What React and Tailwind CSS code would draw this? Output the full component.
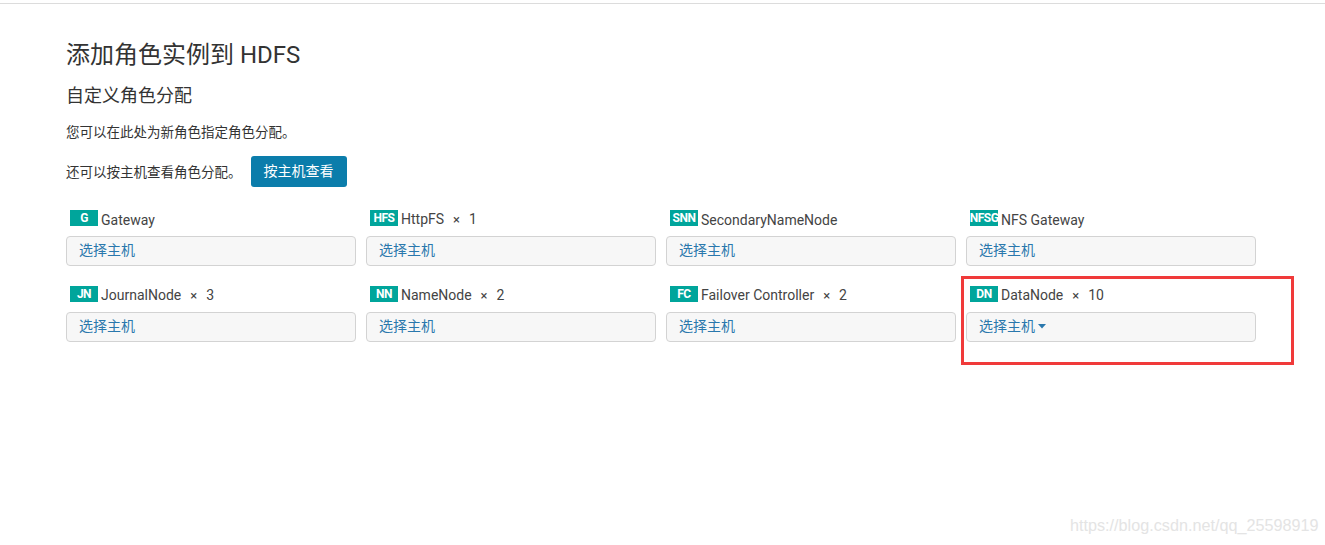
import React from "react";

const roles = [
  { badge: "G", name: "Gateway", count: null },
  { badge: "HFS", name: "HttpFS", count: "1" },
  { badge: "SNN", name: "SecondaryNameNode", count: null },
  { badge: "NFSG", name: "NFS Gateway", count: null },
  { badge: "JN", name: "JournalNode", count: "3" },
  { badge: "NN", name: "NameNode", count: "2" },
  { badge: "FC", name: "Failover Controller", count: "2" },
  { badge: "DN", name: "DataNode", count: "10", caret: true },
];

function RoleCell({ role }) {
  return (
    <div className="flex flex-col">
      <div className="flex items-center h-[16px] pl-[4px]">
        <span className="w-[28px] h-[16px] overflow-hidden whitespace-nowrap bg-[#00a59b] text-white text-[12px] font-bold leading-[16px] flex justify-center tracking-[-0.5px] shrink-0">
          {role.badge}
        </span>
        <span className="ml-[3px] mt-[3px] text-[14px] leading-[16px] text-[#444] whitespace-nowrap">
          {role.name}
          {role.count && (
            <>
              <span className="ml-[9px] mr-[9px] text-[13px]">×</span>
              {role.count}
            </>
          )}
        </span>
      </div>
      <div className="mt-[10px] h-[30px] rounded-[4px] border border-[#d3d3d3] bg-[#f7f7f7] flex items-center pl-[12px]">
        <span className="text-[14px] text-[#2a78ad] leading-[20px] -mt-[2px]">选择主机</span>
        {role.caret && (
          <svg className="ml-[3px] -mt-[1px]" width="8" height="5" viewBox="0 0 8 5">
            <path d="M0 0 L8 0 L4 4.5 Z" fill="#2a78ad" />
          </svg>
        )}
      </div>
    </div>
  );
}

export default function App() {
  return (
    <div
      className="relative w-[1325px] h-[545px] bg-white overflow-hidden"
      style={{ fontFamily: 'Roboto, "Noto Sans CJK SC", sans-serif' }}
    >
      <div className="mt-[3px] border-t border-[#dcdcdc]" />
      <div className="pl-[66px]">
        <h1 className="mt-[36px] text-[24px] leading-[30px] text-[#333] font-normal">
          添加角色实例到 HDFS
        </h1>
        <h2 className="mt-[14px] text-[18px] leading-[24px] text-[#333] font-normal">
          自定义角色分配
        </h2>
        <p className="mt-[14px] text-[13.5px] leading-[20px] text-[#333]">
          您可以在此处为新角色指定角色分配。
        </p>
        <div className="mt-[14px] flex items-center h-[31px]">
          <span className="text-[13.5px] leading-[20px] text-[#333]">还可以按主机查看角色分配。</span>
          <button className="ml-[9px] h-[31px] w-[96px] rounded-[3px] bg-[#0b7dab] text-white text-[14px] flex items-center justify-center">
            按主机查看
          </button>
        </div>
        <div className="mt-[23px] grid grid-cols-4 w-[1190px] gap-x-[10px] gap-y-[20px]">
          {roles.map((r) => (
            <RoleCell key={r.badge} role={r} />
          ))}
        </div>
      </div>
      <div className="absolute left-[961px] top-[276px] w-[333px] h-[89px] border-[3px] border-[#f03a3a]" />
      <div
        className="absolute left-[1070px] top-[515px] text-[16.2px] text-[#e4e4e4] leading-[20px]"
        style={{ fontFamily: '"Liberation Sans", Arial, sans-serif' }}
      >
        https://blog.csdn.net/qq_25598919
      </div>
    </div>
  );
}
